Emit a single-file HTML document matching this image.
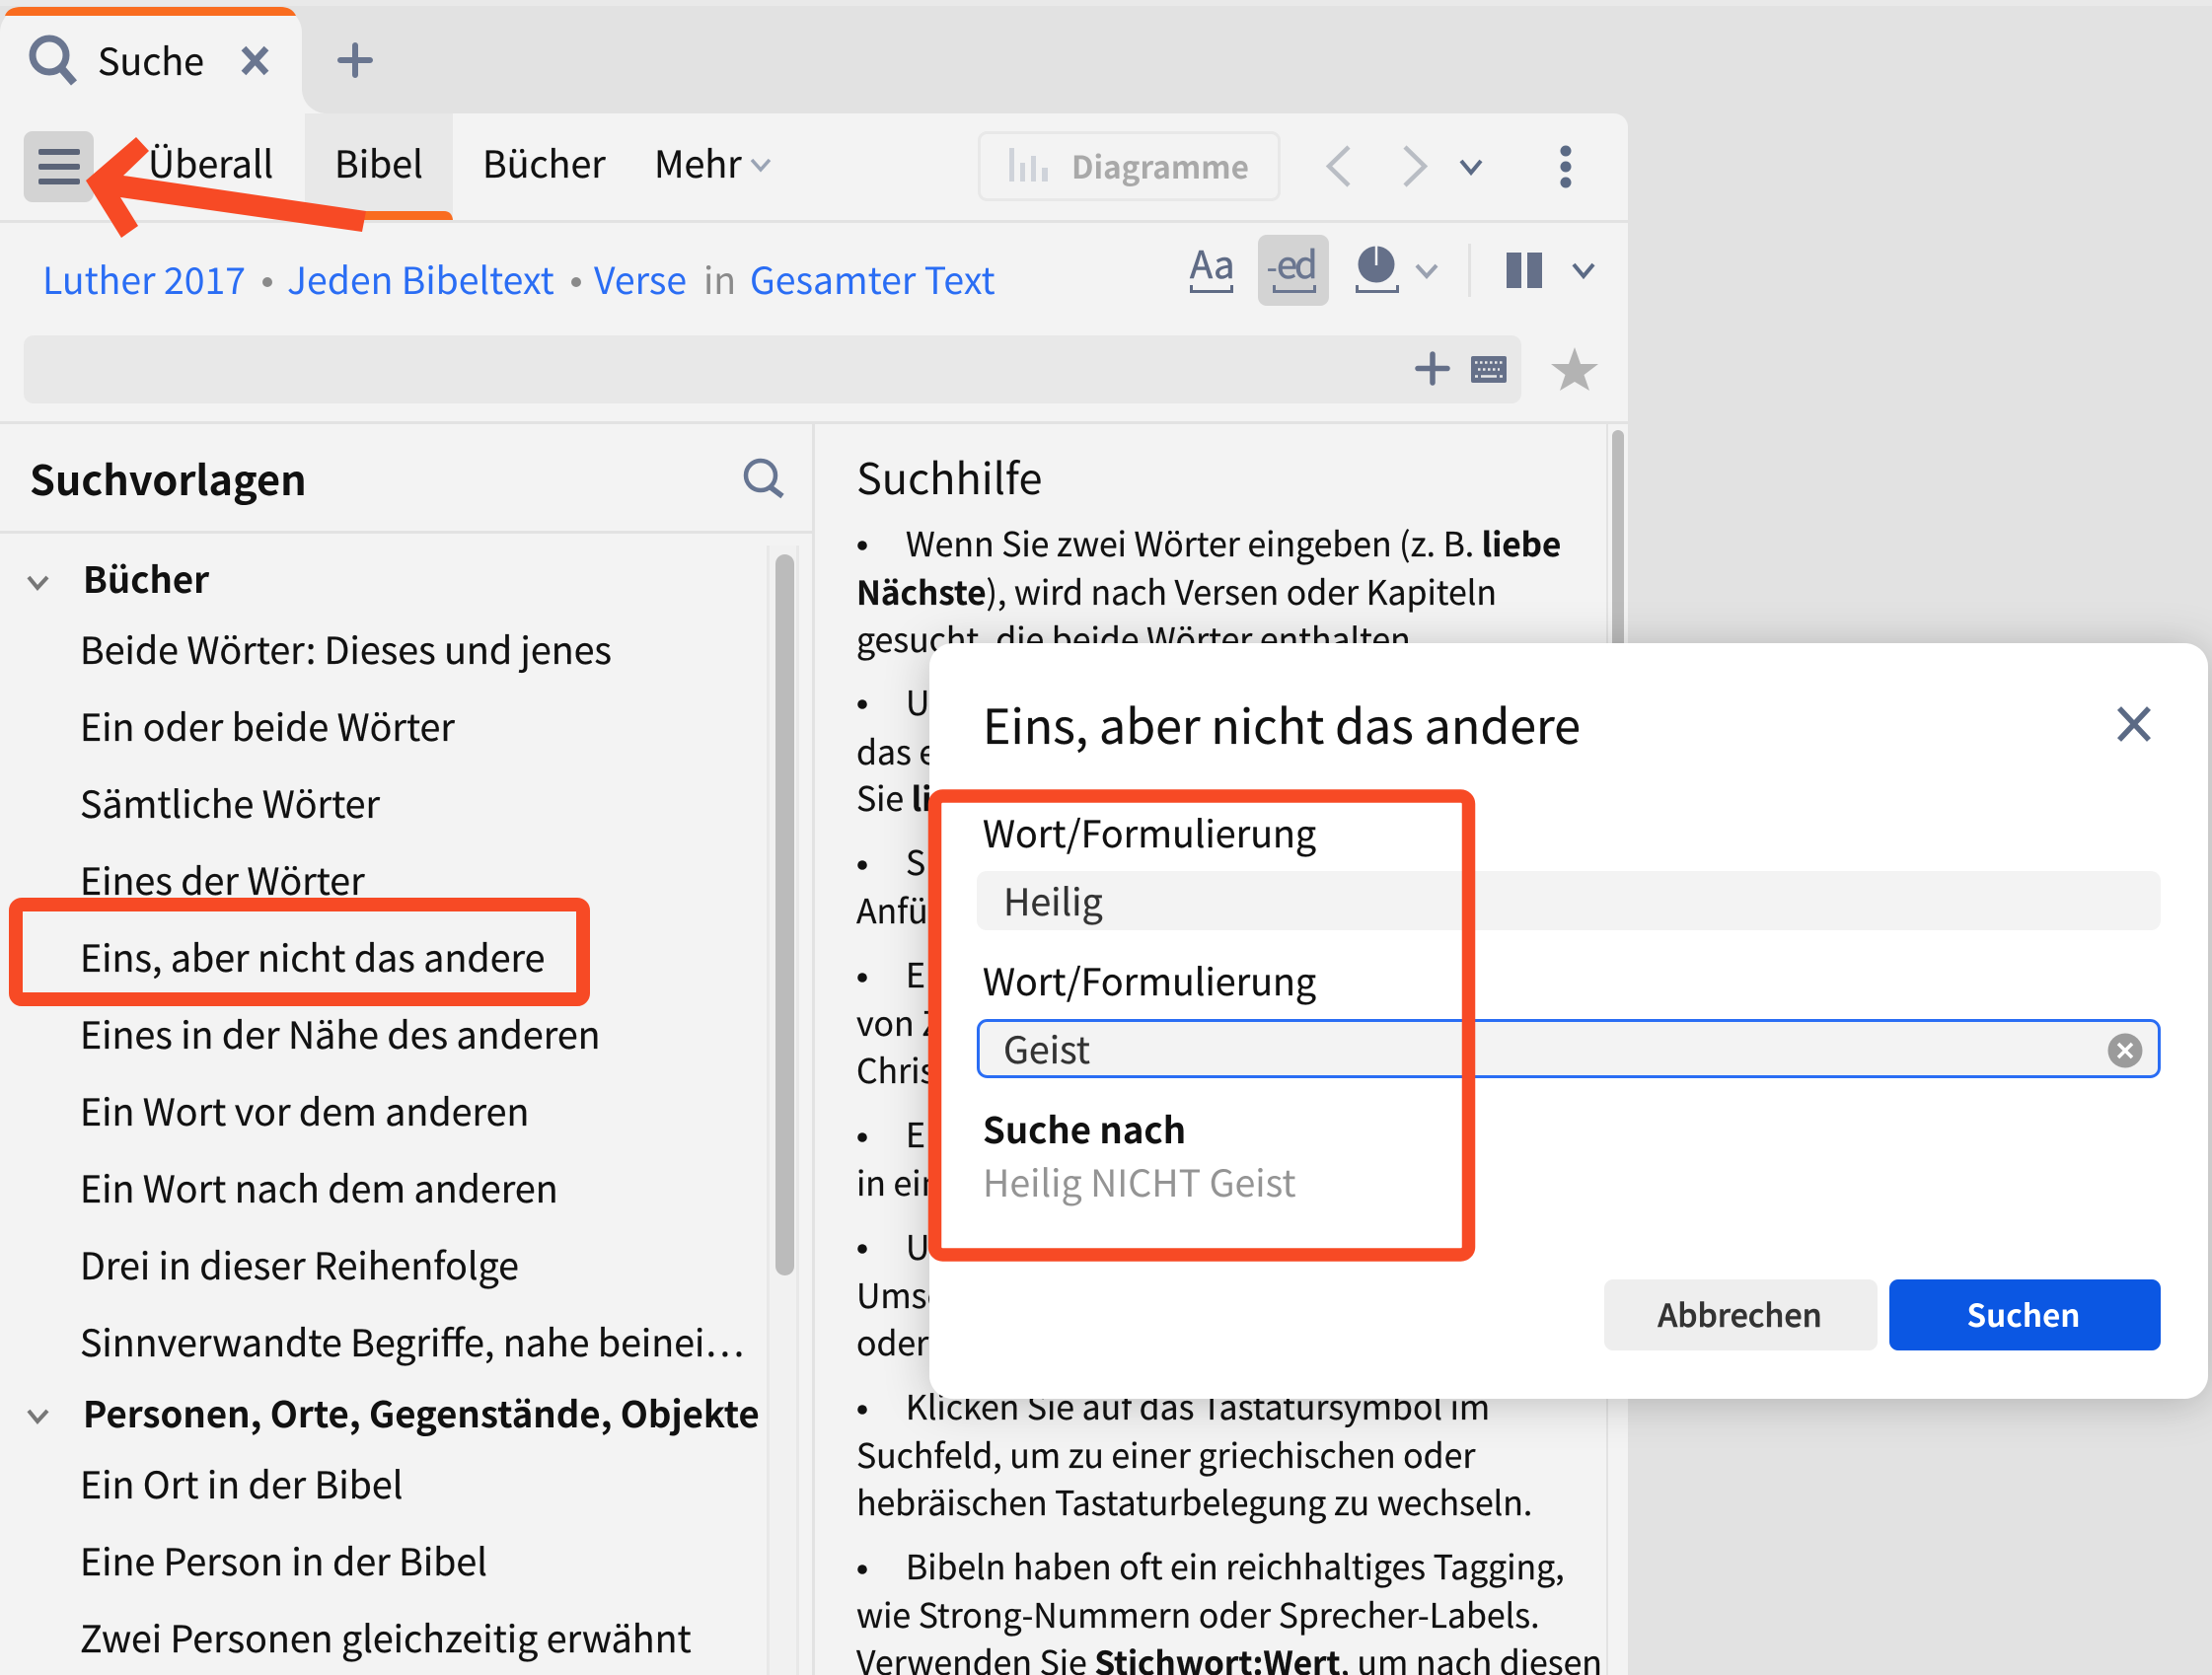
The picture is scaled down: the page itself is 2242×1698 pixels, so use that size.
<!DOCTYPE html>
<html lang="de">
<head>
<meta charset="utf-8">
<title>Suche</title>
<style>
html,body{margin:0;padding:0;background:#e2e2e2;width:2242px;height:1698px;overflow:hidden}
svg{display:block;position:absolute;left:0;top:0}
text{font-family:"Noto Sans CJK SC","Noto Sans CJK JP","Liberation Sans",sans-serif;fill:#111;white-space:pre}
.l{font-size:37.6px;stroke:#111;stroke-width:.2px}
.b{font-size:33.8px;stroke:#111;stroke-width:.2px}
.h{font-weight:700;font-size:36.6px}
.b .h,.bh{font-size:33.2px;font-weight:700}
.n{font-size:37.6px;stroke:#111;stroke-width:.2px}
.bl{fill:#2a6df4;font-size:37.4px}
</style>
</head>
<body>
<svg width="2242" height="1698" viewBox="0 0 2242 1698" xmlns="http://www.w3.org/2000/svg">
<defs>
<filter id="sh" x="-10%" y="-15%" width="120%" height="130%"><feDropShadow dx="0" dy="4" stdDeviation="22" flood-color="#000" flood-opacity=".22"/></filter>
</defs>
<!-- backdrop -->
<rect width="2242" height="1698" fill="#e2e2e2"/>
<rect width="2242" height="6" fill="#e9e9e9"/>
<!-- main panel -->
<path d="M0 115H1636a14 14 0 0 1 14 14V1698H0Z" fill="#f3f3f3"/>
<!-- tab -->
<path d="M0 115V33a26 26 0 0 1 26-26H280a26 26 0 0 1 26 26V115Z" fill="#f3f3f3"/>
<path d="M5 16Q8 7 22 7H284Q296 7 300 16Z" fill="#f96c1f"/>
<path d="M306 90a25 25 0 0 0 25 25H306Z" fill="#f3f3f3"/>
<!-- tab content -->
<circle cx="50" cy="56" r="17" fill="none" stroke="#6a7690" stroke-width="7"/>
<path d="M62 69L75 84" stroke="#6a7690" stroke-width="8" fill="none"/>
<text x="99" y="76" class="n">Suche</text>
<path d="M247 49L270 74M270 49L247 74" stroke="#6a7690" stroke-width="6.500" fill="none"/>
<path d="M360 46V76M345 61H375" stroke="#6a7690" stroke-width="6" stroke-linecap="round" fill="none"/>
<!-- toolbar -->
<rect x="24" y="133" width="71" height="72" rx="9" fill="#d3d3d3"/>
<g fill="#5b6478"><rect x="39" y="151" width="42" height="6" rx="2"/><rect x="39" y="166" width="42" height="6" rx="2"/><rect x="39" y="181" width="42" height="6" rx="2"/></g>
<rect x="309" y="115" width="150" height="108" fill="#e8e8e8"/>
<path d="M309 223V214H450Q458 214 459 223Z" fill="#f96c1f"/>
<text x="150" y="180" class="n">Überall</text>
<text x="339" y="180" class="n">Bibel</text>
<text x="489" y="180" class="n">Bücher</text>
<text x="663" y="180" class="n">Mehr</text>
<path d="M762 162L771 172L780 162" stroke="#9aa4b5" stroke-width="3.500" fill="none"/>
<rect x="992.500" y="134.500" width="304" height="68" rx="8" fill="none" stroke="#e8e8e8" stroke-width="3"/>
<g fill="#cfd3da"><rect x="1023" y="150" width="5" height="34"/><rect x="1034" y="165" width="5" height="19"/><rect x="1045" y="158" width="5" height="26"/><rect x="1056" y="170" width="6" height="14"/></g>
<text x="1086" y="181" font-size="31.500" font-weight="700" style="fill:#a9a9a9">Diagramme</text>
<path d="M1367 149L1347 168.500L1367 188" stroke="#b9bdc4" stroke-width="4.500" fill="none"/>
<path d="M1424 149L1444 168.500L1424 188" stroke="#b9bdc4" stroke-width="4.500" fill="none"/>
<path d="M1481 163L1491 175L1501 163" stroke="#5b6a85" stroke-width="4" fill="none"/>
<g fill="#5b6a85"><circle cx="1587" cy="153" r="5.500"/><circle cx="1587" cy="169" r="5.500"/><circle cx="1587" cy="185" r="5.500"/></g>
<rect x="0" y="223" width="1650" height="3" fill="#e2e2e2"/>
<rect x="0" y="427" width="1650" height="3" fill="#e2e2e2"/>
<!-- scope line -->
<text x="43" y="298" class="bl">Luther 2017</text>
<circle cx="271" cy="286" r="5" fill="#8a8a8a"/>
<text x="291" y="298" class="bl">Jeden Bibeltext</text>
<circle cx="584" cy="286" r="5" fill="#8a8a8a"/>
<text x="602" y="298" class="bl">Verse</text>
<text x="713" y="298" font-size="37.400" style="fill:#8a8a8a">in</text>
<text x="760" y="298" class="bl">Gesamter Text</text>
<!-- display icons -->
<text x="1206" y="282" font-size="38" style="fill:#5f6b85;stroke:#5f6b85;stroke-width:.6px">Aa</text>
<path d="M1207.500 289v6.500h41v-6.500" stroke="#5f6b85" stroke-width="3" fill="none"/>
<rect x="1275" y="238" width="72" height="72" rx="9" fill="#d3d3d3"/>
<text x="1284" y="282" font-size="30" style="fill:#6a7690;stroke:#6a7690;stroke-width:.6px">-</text>
<text x="1294" y="282" font-size="38" letter-spacing="-3" style="fill:#6a7690;stroke:#6a7690;stroke-width:.6px">ed</text>
<path d="M1291.500 289v6.500h41v-6.500" stroke="#6a7690" stroke-width="3" fill="none"/>
<circle cx="1395" cy="268" r="18.500" fill="#657089"/>
<path d="M1395 249V269" stroke="#f3f3f3" stroke-width="2.500"/>
<path d="M1375.500 289v6.500h41v-6.500" stroke="#657089" stroke-width="3" fill="none"/>
<path d="M1436 269L1446 280L1456 269" stroke="#9aa1b0" stroke-width="4" fill="none"/>
<rect x="1488" y="247" width="3" height="54" fill="#e2e2e2"/>
<rect x="1527" y="256" width="15" height="36" fill="#657089"/>
<rect x="1548" y="256" width="15" height="36" fill="#657089"/>
<path d="M1595 268L1605 280L1615 268" stroke="#5b6a85" stroke-width="4" fill="none"/>
<!-- search field -->
<rect x="24" y="340" width="1518" height="69" rx="10" fill="#e8e8e8"/>
<path d="M1452 359V388M1437 373.500H1467" stroke="#657089" stroke-width="5.500" stroke-linecap="round" fill="none"/>
<rect x="1491" y="361" width="36" height="27" rx="2" fill="#657089"/>
<path d="M1495 367.500h28M1498 374.500h22" stroke="#e8e8e8" stroke-width="2.500" stroke-dasharray="2.500 2.500" fill="none"/>
<path d="M1495 381.500h3M1501 381.500h16M1520 381.500h3" stroke="#e8e8e8" stroke-width="2.500" fill="none"/>
<path d="M1596 352L1602 369L1620 369L1605.500 380L1611 396L1596 387L1581 396L1586.500 380L1572 369L1590 369Z" fill="#b3b3b3"/>
<!-- left pane -->
<text x="30" y="502" font-size="41.500" font-weight="700">Suchvorlagen</text>
<circle cx="771" cy="482" r="15" fill="none" stroke="#667592" stroke-width="4.500"/>
<path d="M781 494L793 503" stroke="#667592" stroke-width="5.500" fill="none"/>
<rect x="0" y="538" width="823" height="3" fill="#e2e2e2"/>
<rect x="823" y="430" width="3" height="1268" fill="#e2e2e2"/>
<rect x="777" y="553" width="33" height="1145" fill="#f1f1f1"/>
<rect x="777" y="553" width="3" height="1145" fill="#e8e8e8"/>
<rect x="807" y="553" width="3" height="1145" fill="#e8e8e8"/>
<rect x="786" y="562" width="19" height="731" rx="9.500" fill="#bbb"/>

<path d="M29 585L38 596L48 585" stroke="#777" stroke-width="4" fill="none"/>
<text x="84" y="601" class="h">Bücher</text>
<text x="81" y="673" class="l">Beide Wörter: Dieses und jenes</text>
<text x="81" y="751" class="l">Ein oder beide Wörter</text>
<text x="81" y="829" class="l">Sämtliche Wörter</text>
<text x="81" y="907" class="l">Eines der Wörter</text>
<text x="81" y="985" class="l">Eins, aber nicht das andere</text>
<text x="81" y="1063" class="l">Eines in der Nähe des anderen</text>
<text x="81" y="1141" class="l">Ein Wort vor dem anderen</text>
<text x="81" y="1219" class="l">Ein Wort nach dem anderen</text>
<text x="81" y="1297" class="l">Drei in dieser Reihenfolge</text>
<text x="81" y="1375" class="l">Sinnverwandte Begriffe, nahe beinei…</text>
<path d="M29 1430L38 1441L48 1430" stroke="#777" stroke-width="4" fill="none"/>
<text x="84" y="1447" class="h">Personen, Orte, Gegenstände, Objekte</text>
<text x="81" y="1519" class="l">Ein Ort in der Bibel</text>
<text x="81" y="1597" class="l">Eine Person in der Bibel</text>
<text x="81" y="1675" class="l">Zwei Personen gleichzeitig erwähnt</text>

<!-- red box list -->
<rect x="16" y="917" width="575" height="96" rx="6" fill="none" stroke="#f74a25" stroke-width="14"/>

<!-- right pane -->
<rect x="1628" y="430" width="2" height="1268" fill="#e2e2e2"/>
<rect x="1634" y="436" width="12" height="600" rx="6" fill="#bbb"/>
<text x="868" y="501" font-size="43.300">Suchhilfe</text>
<g fill="#111">
<circle cx="874" cy="553" r="4.800"/><circle cx="874" cy="714" r="4.800"/><circle cx="874" cy="877" r="4.800"/><circle cx="874" cy="991" r="4.800"/><circle cx="874" cy="1153" r="4.800"/><circle cx="874" cy="1266" r="4.800"/><circle cx="874" cy="1429" r="4.800"/><circle cx="874" cy="1591" r="4.800"/>
</g>
<text x="918" y="564" class="b">Wenn Sie zwei Wörter eingeben (z. B. <tspan class="bh">liebe</tspan></text>
<text x="868" y="613" class="b"><tspan class="bh">Nächste</tspan>), wird nach Versen oder Kapiteln</text>
<text x="868" y="661" class="b">gesucht, die beide Wörter enthalten.</text>
<text x="918" y="725" class="b">U</text>
<text x="868" y="775" class="b">das e</text>
<text x="868" y="822" class="b">Sie <tspan class="bh">li</tspan></text>
<text x="918" y="887" class="b">S</text>
<text x="868" y="936" class="b">Anfü</text>
<text x="918" y="1001" class="b">E</text>
<text x="868" y="1050" class="b">von Z</text>
<text x="868" y="1098" class="b">Chris</text>
<text x="918" y="1163" class="b">E</text>
<text x="868" y="1212" class="b">in ein</text>
<text x="918" y="1277" class="b">U</text>
<text x="868" y="1326" class="b">Umsc</text>
<text x="868" y="1374" class="b">oder</text>
<text x="918" y="1439" class="b">Klicken Sie auf das Tastatursymbol im</text>
<text x="868" y="1488" class="b">Suchfeld, um zu einer griechischen oder</text>
<text x="868" y="1536" class="b">hebräischen Tastaturbelegung zu wechseln.</text>
<text x="918" y="1601" class="b">Bibeln haben oft ein reichhaltiges Tagging,</text>
<text x="868" y="1650" class="b">wie Strong-Nummern oder Sprecher-Labels.</text>
<text x="868" y="1698" class="b">Verwenden Sie <tspan class="bh">Stichwort:Wert</tspan>, um nach diesen</text>

<!-- dialog -->
<rect x="942" y="652" width="1296" height="766" rx="24" fill="#fff" filter="url(#sh)"/>
<text x="996" y="754" font-size="48.300" style="stroke:#111;stroke-width:.2px">Eins, aber nicht das andere</text>
<path d="M2148 718L2178 750M2178 718L2148 750" stroke="#5b6a85" stroke-width="5.500" fill="none"/>
<text x="996" y="859" class="n">Wort/Formulierung</text>
<rect x="990" y="883" width="1200" height="60" rx="10" fill="#f3f3f3"/>
<text x="1017" y="928" class="n" style="fill:#333;stroke:#333">Heilig</text>
<text x="996" y="1009" class="n">Wort/Formulierung</text>
<rect x="991.500" y="1034.500" width="1197" height="57" rx="9" fill="#f3f3f3" stroke="#2a6df4" stroke-width="3"/>
<text x="1017" y="1078" class="n" style="fill:#333;stroke:#333">Geist</text>
<circle cx="2154" cy="1065" r="17.500" fill="#9b9b9b"/>
<path d="M2147 1058L2161 1072M2161 1058L2147 1072" stroke="#fff" stroke-width="3.500" fill="none"/>
<text x="996" y="1159" class="h">Suche nach</text>
<text x="996" y="1213" class="n" style="fill:#949494;stroke:none">Heilig NICHT Geist</text>
<rect x="1626" y="1297" width="277" height="72" rx="9" fill="#eee"/>
<text x="1763.500" y="1345" font-size="32.200" font-weight="500" text-anchor="middle" style="fill:#333;stroke:#333;stroke-width:.5px">Abbrechen</text>
<rect x="1915" y="1297" width="275" height="72" rx="9" fill="#0b57e3"/>
<text x="2051" y="1345" font-size="31.500" font-weight="700" text-anchor="middle" style="fill:#fff">Suchen</text>
<!-- red box dialog -->
<rect x="947.500" y="807" width="541" height="465" rx="8" fill="none" stroke="#f74a25" stroke-width="13.500"/>

<!-- arrow -->
<path d="M87 183L138 139L151 153L125 178L371 214L367 235L122 200L140 229L123 241Z" fill="#f74a25"/>
</svg>
</body>
</html>
